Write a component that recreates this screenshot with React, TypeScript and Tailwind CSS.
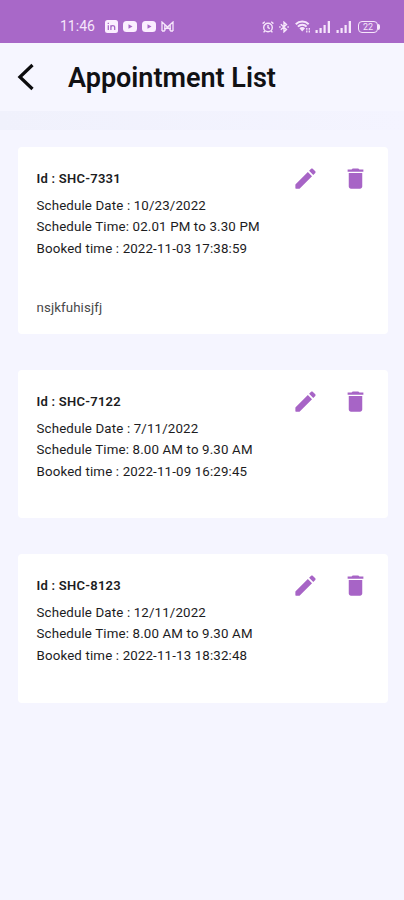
import { MdDelete } from 'react-icons/md';

type Appointment = {
  id: string;
  date: string;
  time: string;
  booked: string;
  note?: string;
};

const appointments: Appointment[] = [
  { id: 'SHC-7331', date: '10/23/2022', time: '02.01 PM to 3.30 PM', booked: '2022-11-03 17:38:59', note: 'nsjkfuhisjfj' },
  { id: 'SHC-7122', date: '7/11/2022', time: '8.00 AM to 9.30 AM', booked: '2022-11-09 16:29:45' },
  { id: 'SHC-8123', date: '12/11/2022', time: '8.00 AM to 9.30 AM', booked: '2022-11-13 18:32:48' },
];

function VideoIcon() {
  return (
    <svg className="w-[14px] h-[11px]" viewBox="0 0 14 11">
      <rect width="14" height="11" rx="3.5" fill="#fbeeff" />
      <path d="M5.5 3.2v4.6l4-2.3z" fill="#a868c8" />
    </svg>
  );
}

function Signal() {
  return (
    <svg className="w-[16px] h-[13px]" viewBox="0 0 16 13" fill="#f6e6fb">
      <rect x="0.5" y="10" width="2.2" height="3" />
      <rect x="4.5" y="8" width="2.2" height="5" />
      <rect x="8.5" y="5" width="2.2" height="8" />
      <rect x="12.7" y="1" width="2.3" height="12" />
    </svg>
  );
}

function StatusBar() {
  return (
    <div className="h-[43px] bg-[#a868c8] pl-[60px] pr-6 pt-[10px] flex items-center text-[#f6e6fb]">
      <span className="text-[14px] w-[35px]">11:46</span>
      <div className="flex items-center gap-[5px] ml-[10px]">
        <svg className="w-[13px] h-[13px]" viewBox="0 0 13 13">
          <rect width="13" height="13" rx="2.5" fill="#fbeeff" />
          <path d="M3.3 5.3V10M3.3 2.8v1.3M5.9 5.3V10M5.9 7.5c0-2.6 3.8-2.6 3.8 0V10" fill="none" stroke="#a868c8" strokeWidth="1.3" />
        </svg>
        <VideoIcon />
        <VideoIcon />
        <svg className="w-[13px] h-[11px]" viewBox="0 0 13 11" fill="none" stroke="#f6e6fb" strokeWidth="1.3">
          <path d="M1 10V1l5.5 5L12 1v9M3.8 10V4M9.2 10V4M1 10h2.8M9.2 10H12M3.8 8.5l2.7-2.3 2.7 2.3" />
        </svg>
      </div>
      <div className="flex items-center ml-auto">
        <svg className="w-[12px] h-[12px]" viewBox="0 0 12 12" fill="none" stroke="#f6e6fb" strokeWidth="1.4">
          <circle cx="6" cy="6.5" r="4.3" />
          <path d="M6 4v2.7l1.8 1M.6 2.6 2.8.8M11.4 2.6 9.2.8M2.8 10 1.6 11.4M9.2 10l1.2 1.4" />
        </svg>
        <svg className="w-[10px] h-[12px] ml-[5px]" viewBox="0 0 10 12" fill="none" stroke="#f6e6fb" strokeWidth="1.4">
          <path d="M1.8 3.3 7.5 8.4 5 10.8V1.2l2.5 2.4-5.7 5.1M.2 6h1.4M8.4 6h1.4" />
        </svg>
        <svg className="w-[16px] h-[13px] ml-[6px]" viewBox="0 0 16 13" fill="none" stroke="#f6e6fb">
          <path d="M.8 4.2c3.5-3.6 9.4-3.6 12.9 0M2.9 6.6c2.4-2.5 6.4-2.5 8.7 0" strokeWidth="2" />
          <path d="M4.4 8.3c1.6-1.6 4.1-1.6 5.7 0L7.2 11.5z" fill="#f6e6fb" stroke="none" />
          <path d="M11.8 8v4.5M14.3 8v4.5" strokeWidth="1.3" strokeDasharray="1.8 .8" />
        </svg>
        <span className="ml-[4px]"><Signal /></span>
        <span className="ml-[5px]"><Signal /></span>
        <div className="ml-[6px] flex items-center">
          <div className="w-[20px] h-[12px] border-[1.5px] border-[#f6e6fb] rounded-[4px] flex items-center justify-center pt-px text-[9px] leading-none">22</div>
          <div className="w-[2px] h-[6px] bg-[#f6e6fb] rounded-r-full" />
        </div>
      </div>
    </div>
  );
}

function AppointmentCard({ item }: { item: Appointment }) {
  return (
    <div className={`bg-white rounded-[4px] pl-[18.5px] pr-[19px] pt-[18px] flex justify-between ${item.note ? 'h-[187px]' : 'h-[148.4px]'}`}>
      <div className="text-[13.3px] leading-[21.5px] text-[#1c1c1e] tracking-[0.15px]">
        <h2 className="font-semibold text-[13px] leading-[27px] mb-[2.5px] tracking-[0.25px]">Id : {item.id}</h2>
        <p>Schedule Date : {item.date}</p>
        <p>Schedule Time: {item.time}</p>
        <p>Booked time : {item.booked}</p>
        {item.note && <p className="mt-[38px] text-[#48484a] tracking-[0.1px]">{item.note}</p>}
      </div>
      <div className="flex gap-[23px] h-[27px] text-[#a764c6]">
        <button aria-label="Edit">
          <svg className="w-[27px] h-[27px]" viewBox="0 0 24 24" fill="currentColor">
            <path d="M3 17.5V20.5c0 .3.2.5.5.5h3c.2 0 .3-.1.4-.2L17.8 9.9 14.1 6.2 3.2 17.1c-.1.1-.2.2-.2.4zM20.7 7c.4-.4.4-1 0-1.4l-2.3-2.3c-.4-.4-1-.4-1.4 0l-1.8 1.8 3.7 3.7z" />
          </svg>
        </button>
        <button aria-label="Delete">
          <MdDelete className="w-[27px] h-[27px]" />
        </button>
      </div>
    </div>
  );
}

export default function App() {
  return (
    <div className="min-h-screen bg-[#f5f5ff] font-[Roboto,sans-serif]">
      <StatusBar />
      <header className="h-[68px] flex items-center pl-[17px] bg-[#f6f6ff]">
        <button aria-label="Back">
          <svg className="w-[17px] h-[28px]" viewBox="0 0 17 28" fill="none" stroke="#0c0c0e" strokeWidth="3.2">
            <path d="M15.5 2 2.9 14l12.6 12" />
          </svg>
        </button>
        <h1 className="ml-[34px] pt-[2px] text-[27px] font-semibold text-[#111114]">Appointment List</h1>
      </header>
      <div className="h-[19px] bg-gradient-to-r from-[#f0f1fc] to-[#f4f4ff]" />
      <main className="pl-[18px] pr-4 pt-[17px] flex flex-col gap-9">
        {appointments.map(item => (
          <AppointmentCard key={item.id} item={item} />
        ))}
      </main>
    </div>
  );
}
